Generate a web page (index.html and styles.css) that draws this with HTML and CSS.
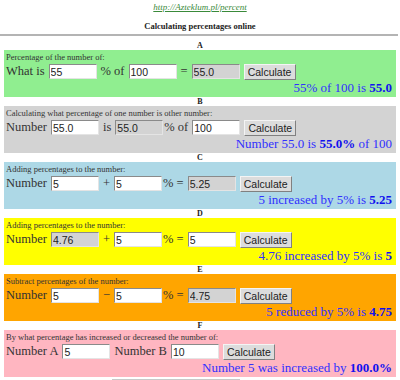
FILE: index.html
```html
<!DOCTYPE html>
<html>
<head>
<meta charset="utf-8">
<link rel="stylesheet" href="styles.css">
</head>
<body>
<a class="link" href="#">http://Azteklum.pl/percent</a>
<div class="title">Calculating percentages online</div>
<hr class="rule">

<div class="sec-label first">A</div>
<div class="box green">
  <div class="desc">Percentage of the number of:</div>
  <div class="row">
    <span>What is</span><input class="field" value="55"><span>% of</span><input class="field" value="100"><span>=</span><input class="field ro" value="55.0" readonly><button class="btn">Calculate</button>
  </div>
  <div class="result">55% of 100 is <b>55.0</b></div>
</div>

<div class="sec-label">B</div>
<div class="box gray">
  <div class="desc">Calculating what percentage of one number is other number:</div>
  <div class="row">
    <span>Number</span><input class="field" value="55.0"><span>is</span><input class="field ro" value="55.0" readonly><span class="tight">% of</span><input class="field" value="100"><button class="btn">Calculate</button>
  </div>
  <div class="result">Number 55.0 is <b>55.0%</b> of 100</div>
</div>

<div class="sec-label">C</div>
<div class="box blue">
  <div class="desc">Adding percentages to the number:</div>
  <div class="row">
    <span>Number</span><input class="field" value="5"><span>+</span><input class="field" value="5"><span class="tight">% =</span><input class="field ro" value="5.25" readonly><button class="btn">Calculate</button>
  </div>
  <div class="result">5 increased by 5% is <b>5.25</b></div>
</div>

<div class="sec-label">D</div>
<div class="box yellow">
  <div class="desc">Adding percentages to the number:</div>
  <div class="row">
    <span>Number</span><input class="field ro" value="4.76" readonly><span>+</span><input class="field" value="5"><span class="tight">% =</span><input class="field" value="5"><button class="btn">Calculate</button>
  </div>
  <div class="result">4.76 increased by 5% is <b>5</b></div>
</div>

<div class="sec-label">E</div>
<div class="box orange">
  <div class="desc">Subtract percentages of the number:</div>
  <div class="row">
    <span>Number</span><input class="field" value="5"><span>&minus;</span><input class="field" value="5"><span class="tight">% =</span><input class="field ro" value="4.75" readonly><button class="btn">Calculate</button>
  </div>
  <div class="result">5 reduced by 5% is <b>4.75</b></div>
</div>

<div class="sec-label">F</div>
<div class="box pink">
  <div class="desc">By what percentage has increased or decreased the number of:</div>
  <div class="row">
    <span>Number A</span><input class="field" value="5"><span>Number B</span><input class="field" value="10"><button class="btn">Calculate</button>
  </div>
  <div class="result">Number 5 was increased by <b>100.0%</b></div>
</div>

<div class="next"></div>
</body>
</html>
```

FILE: styles.css
```css
html, body {
  margin: 0;
  padding: 0;
  background: #fff;
}
body {
  padding: 0 4px;
  font-family: "Liberation Serif", "Times New Roman", serif;
  color: #333;
  overflow: hidden;
}
.link {
  display: block;
  text-align: center;
  font: italic 9px/12px "Liberation Serif", serif;
  color: #3a8a3a;
  text-decoration: underline;
  padding-top: 1px;
}
.title {
  margin-top: 7px;
  text-align: center;
  font: bold 8.5px/12px "Liberation Serif", serif;
  color: #222;
}
.rule {
  border: 0;
  height: 2px;
  background: #b4b4b4;
  margin: 2px -2px 0 -4px;
}
.sec-label {
  text-align: center;
  font: bold 8px/9px "Liberation Serif", serif;
  color: #222;
  height: 9px;
}
.sec-label.first {
  margin-top: 5px;
}
.box {
  height: 47px;
  box-sizing: border-box;
  padding: 2px 4px 2px 2px;
}
.green { background: #90ee90; }
.gray { background: #d3d3d3; }
.blue { background: #add8e6; }
.yellow { background: #ffff00; }
.orange { background: #ffa500; }
.pink { background: #ffb6c1; }
.desc {
  font-size: 8.5px;
  line-height: 11px;
  color: #333;
  white-space: nowrap;
}
.row {
  display: flex;
  align-items: center;
  gap: 4px;
  height: 17px;
  font-size: 12.5px;
  color: #333;
  white-space: nowrap;
}
.row .tight {
  margin-left: -3px;
}
.field {
  box-sizing: border-box;
  width: 48px;
  height: 15px;
  margin: 0;
  padding: 0 1px;
  border: 1px solid;
  border-color: #8a8a8a #e4e4e4 #e4e4e4 #8a8a8a;
  background: #fff;
  font: 10.5px "Liberation Sans", Arial, sans-serif;
  color: #222;
  outline: none;
}
.field.ro {
  background: #d3d3d3;
}
.btn {
  box-sizing: border-box;
  height: 16px;
  width: 52px;
  margin: 0;
  padding: 0;
  border: 1px solid;
  border-color: #f4f4f4 #808080 #808080 #f4f4f4;
  background: #dcdcdc;
  font: 10.5px "Liberation Sans", Arial, sans-serif;
  color: #222;
}
.result {
  text-align: right;
  font-size: 13px;
  line-height: 15px;
  color: #3030ff;
  white-space: nowrap;
}
.result b {
  color: #1010ee;
}
.next {
  margin: 2px 0 0 108px;
  width: 126px;
  height: 10px;
  border: 1px solid #c8c8c8;
}
```
